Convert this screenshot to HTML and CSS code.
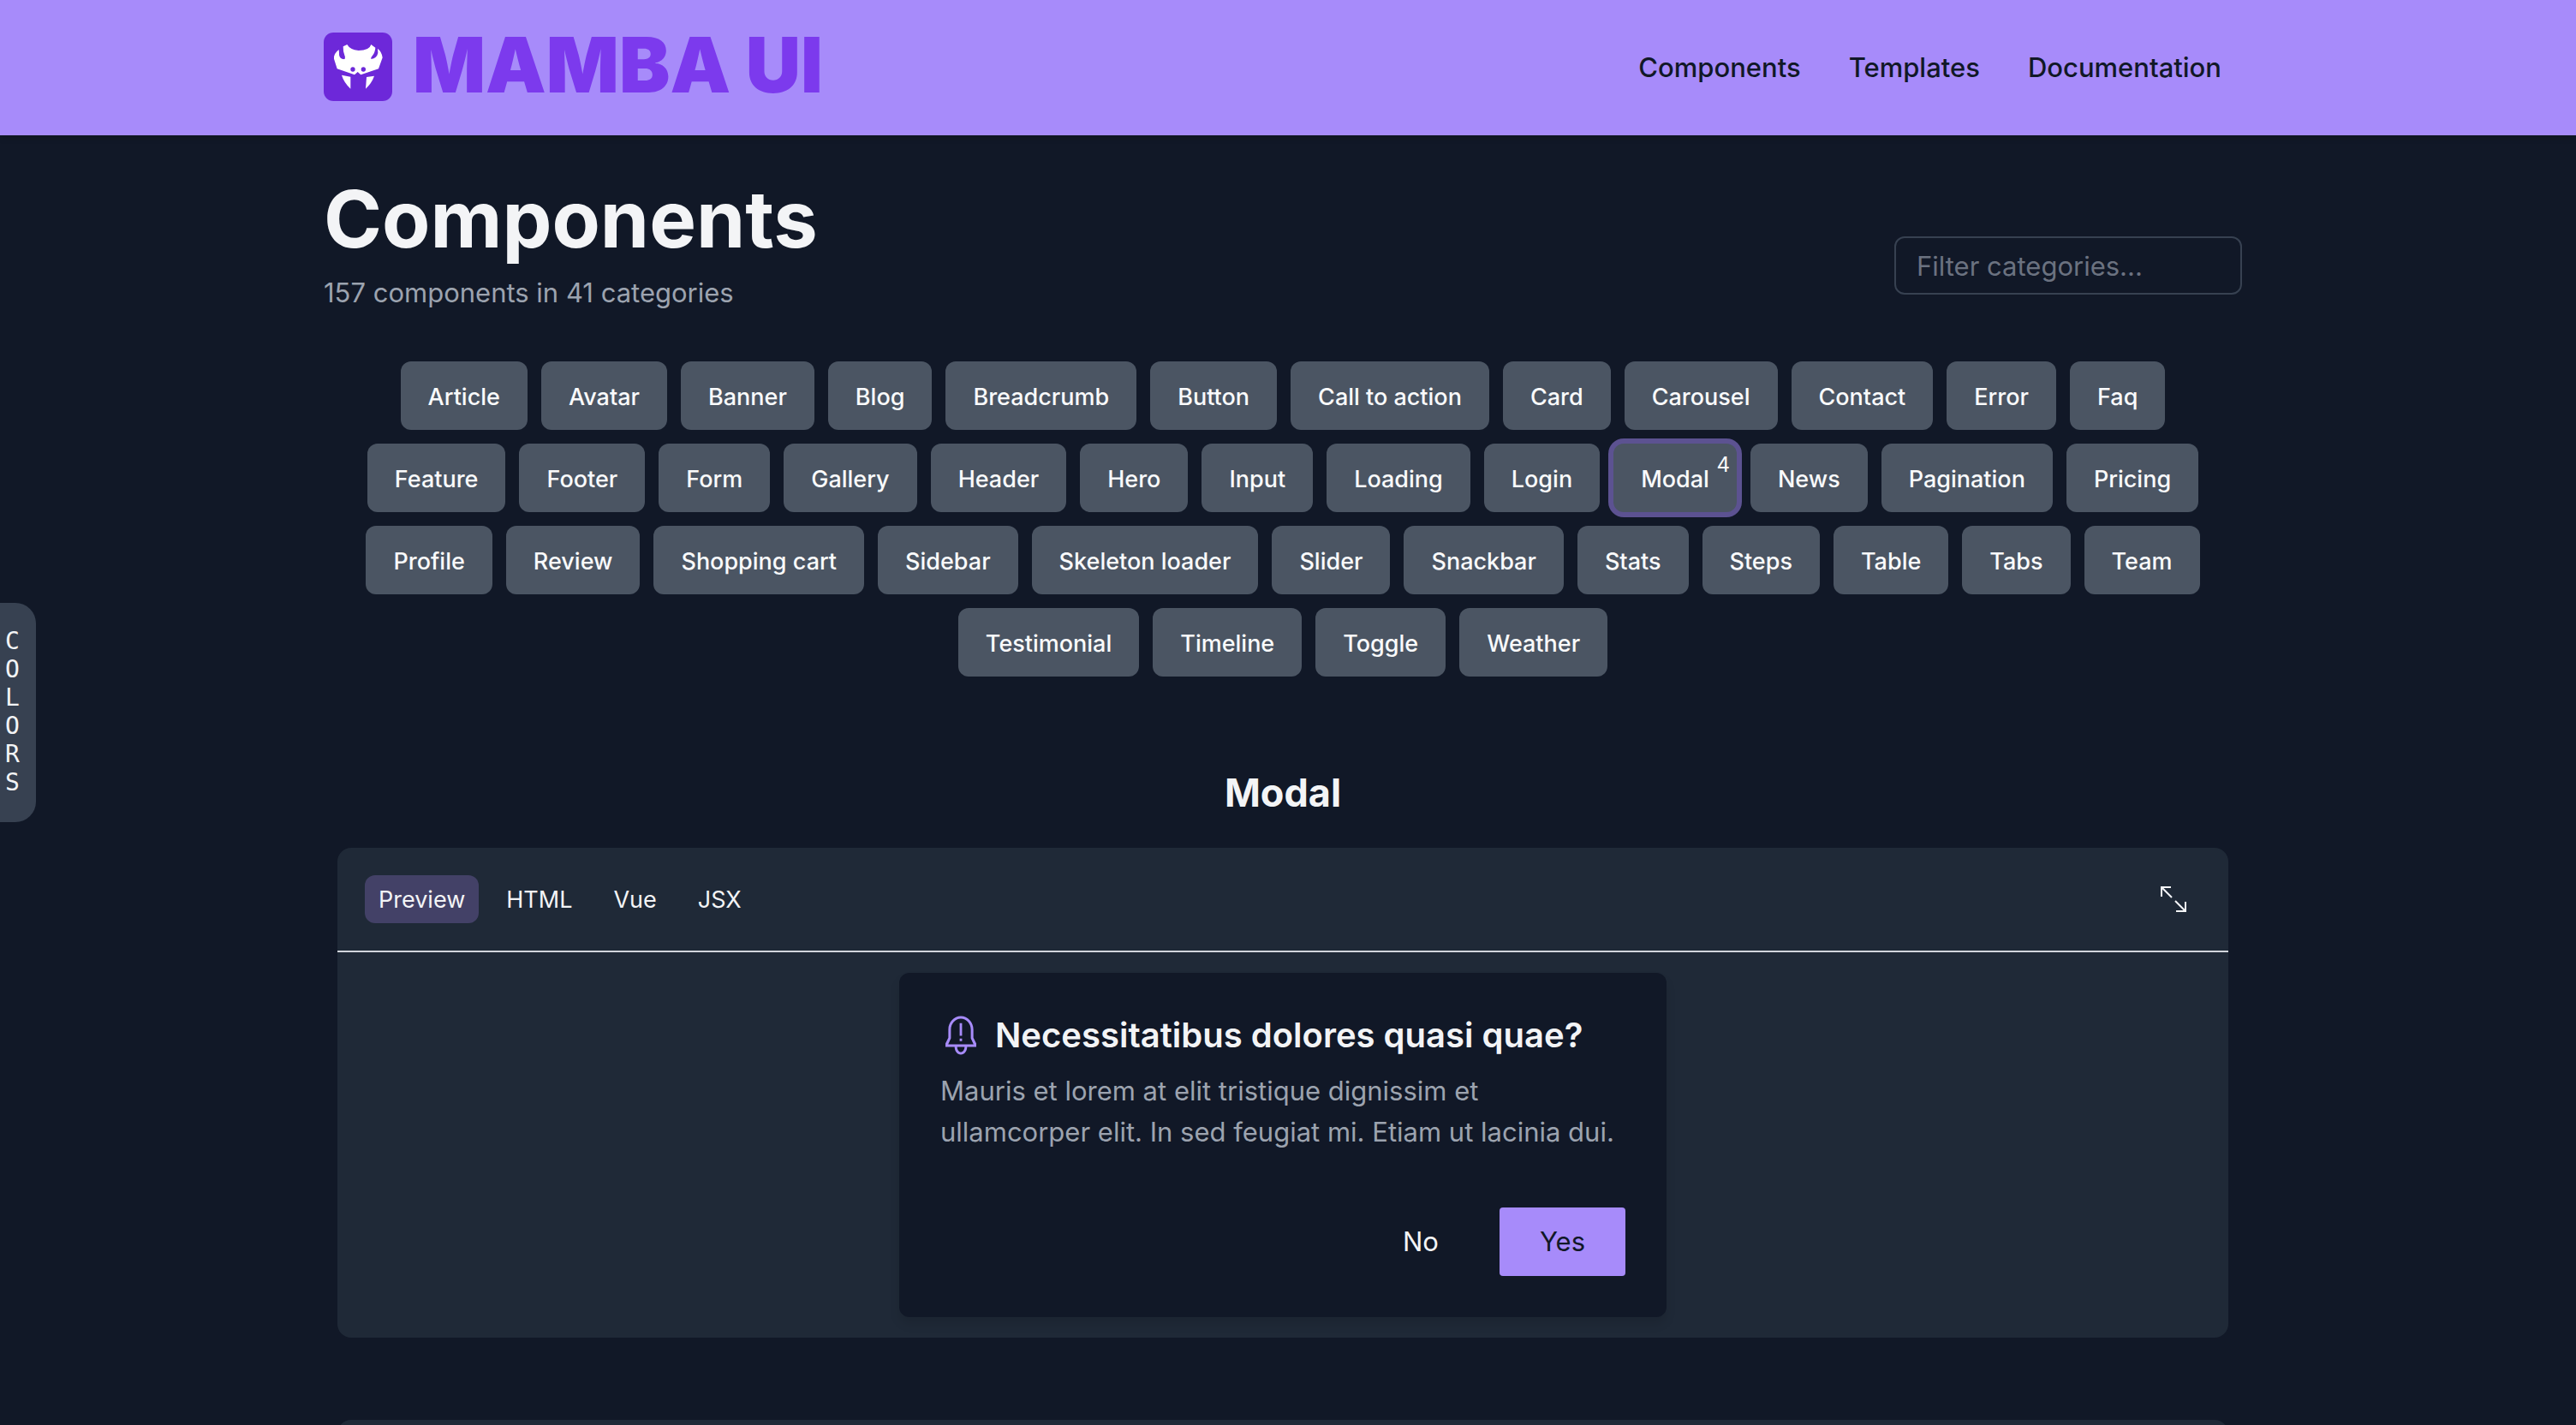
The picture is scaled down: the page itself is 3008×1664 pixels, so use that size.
FILE: index.html
```html
<!DOCTYPE html>
<html lang="en">
<head>
<meta charset="utf-8">
<title>Mamba UI - Components</title>
<link rel="stylesheet" href="styles.css">
</head>
<body>
<header class="site-header">
  <div class="container header-row">
    <a class="brand" href="#">
      <svg class="brand-mark" viewBox="24 24 240 240" aria-hidden="true">
        <rect x="24" y="24" width="240" height="240" rx="34" fill="#6d28d9"/>
        <g fill="#fff">
          <path d="M106 66L92 73Q91 92 99 110L95 118Q82 112 78 96L77 84Q58 98 60 116L71 151L132 172L143 162L154 172L216 151L230 112Q228 92 213 80L214 96Q210 114 190 117Q188 112 194 106Q204 94 205 77L190 66Q184 87 146 87Q116 84 106 66Z"/>
          <path d="M87 173L118 179V221Q94 198 87 173Z"/>
          <path d="M201 176L174 180L171 221Q193 200 201 176Z"/>
          <path fill="#6d28d9" d="M79 85Q80 105 99 113L97 117Q80 118 78 102Z"/>
        </g>
        <circle cx="126" cy="153" r="8" fill="#6d28d9"/>
        <circle cx="163" cy="153" r="8" fill="#6d28d9"/>
      </svg>
      <span class="brand-name">MAMBA UI</span>
    </a>
    <nav class="site-nav">
      <a href="#">Components</a>
      <a href="#">Templates</a>
      <a href="#">Documentation</a>
    </nav>
  </div>
</header>

<aside class="colors-tab"><button type="button" aria-label="Colors"><span>C</span><span>O</span><span>L</span><span>O</span><span>R</span><span>S</span></button></aside>

<main class="container">
  <div class="page-head">
    <div>
      <h1>Components</h1>
      <p class="summary">157 components in 41 categories</p>
    </div>
    <input class="filter" type="text" placeholder="Filter categories..." aria-label="Filter categories">
  </div>

  <nav class="categories">
    <a href="#">Article</a><a href="#">Avatar</a><a href="#">Banner</a><a href="#">Blog</a><a href="#">Breadcrumb</a><a href="#">Button</a><a href="#">Call to action</a><a href="#">Card</a><a href="#">Carousel</a><a href="#">Contact</a><a href="#">Error</a><a href="#">Faq</a>
    <a href="#">Feature</a><a href="#">Footer</a><a href="#">Form</a><a href="#">Gallery</a><a href="#">Header</a><a href="#">Hero</a><a href="#">Input</a><a href="#">Loading</a><a href="#">Login</a><a href="#" class="current">Modal<span class="count">4</span></a><a href="#">News</a><a href="#">Pagination</a><a href="#">Pricing</a>
    <a href="#">Profile</a><a href="#">Review</a><a href="#">Shopping cart</a><a href="#">Sidebar</a><a href="#">Skeleton loader</a><a href="#">Slider</a><a href="#">Snackbar</a><a href="#">Stats</a><a href="#">Steps</a><a href="#">Table</a><a href="#">Tabs</a><a href="#">Team</a>
    <a href="#">Testimonial</a><a href="#">Timeline</a><a href="#">Toggle</a><a href="#">Weather</a>
  </nav>

  <h2>Modal</h2>

  <section class="panel">
    <div class="panel-bar">
      <div class="tabs">
        <button type="button" class="active">Preview</button>
        <button type="button">HTML</button>
        <button type="button">Vue</button>
        <button type="button">JSX</button>
      </div>
      <button type="button" class="expand" aria-label="Full screen">
        <svg viewBox="0 0 32 32" fill="none" stroke="currentColor" stroke-width="2">
          <path d="M2 13V2H13M2 2L14 14M30 19V30H19M30 30L18 18"/>
        </svg>
      </button>
    </div>
    <div class="stage">
      <div class="modal">
        <div class="modal-title">
          <svg class="bell" viewBox="0 0 512 512" fill="currentColor" aria-hidden="true">
            <path d="M448 358L412 284V184C412 92 343 16 256 16S100 92 100 184V284L64 358V400H178C178 452 212 496 256 496S334 452 334 400H448ZM256 464C231 464 210 435 210 400H302C302 435 281 464 256 464ZM98 368L132 292V184C132 110 188 48 256 48S380 110 380 184V292L414 368Z"/>
            <path d="M241 104H271V260H241ZM241 296H271V328H241Z"/>
          </svg>
          <h3>Necessitatibus dolores quasi quae?</h3>
        </div>
        <p>Mauris et lorem at elit tristique dignissim et ullamcorper elit. In sed feugiat mi. Etiam ut lacinia dui.</p>
        <div class="modal-actions">
          <button type="button">No</button>
          <button type="button" class="primary">Yes</button>
        </div>
      </div>
    </div>
  </section>

  <section class="panel next-panel"></section>
</main>
</body>
</html>
```
FILE: styles.css
```css
* { box-sizing: border-box; margin: 0; }

html { scrollbar-width: none; }

body {
  background: #111827;
  color: #f3f4f6;
  font-family: Inter, "Liberation Sans", sans-serif;
  font-size: 31px;
  line-height: 48px;
}

a { color: inherit; text-decoration: none; }

button {
  border: 0;
  background: none;
  color: inherit;
  font: inherit;
  cursor: pointer;
}

.container {
  width: calc(100% - 12px);
  padding: 0 calc(50% - 1126px);
}

.site-header {
  background: #a78bfa;
  color: #111827;
  box-shadow: 0 2px 8px rgba(0, 0, 0, .2);
}

.header-row {
  display: flex;
  align-items: center;
  justify-content: space-between;
  min-height: 158px;
}

.brand { display: flex; align-items: center; gap: 24px; padding-bottom: 2px; }
.brand-mark { width: 80px; height: 80px; }
.brand-name {
  color: #7c3aed;
  font-size: 89px;
  font-weight: 900;
  line-height: 76px;
  padding-bottom: 4px;
}

.site-nav {
  display: flex;
  gap: 56px;
  padding-right: 24px;
  font-weight: 500;
}

.page-head {
  display: flex;
  align-items: center;
  justify-content: space-between;
  padding-top: 50px;
}

h1 { font-size: 92px; line-height: 96px; font-weight: 700; }
.summary { margin-top: 14px; padding-bottom: 2px; color: #9ca3af; }

.filter {
  width: 406px;
  height: 68px;
  margin-top: 44px;
  padding: 0 24px;
  border: 2px solid #374151;
  border-radius: 12px;
  background: transparent;
  color: inherit;
  font: inherit;
}
.filter::placeholder { color: #6b7280; opacity: 1; }

.categories {
  display: flex;
  flex-wrap: wrap;
  justify-content: center;
  gap: 16px;
  padding: 54px 32px 0;
}
.categories a {
  position: relative;
  padding: 18px 32px 14px;
  border-radius: 12px;
  background: #4b5563;
  color: #f9fafb;
  font-size: 27px;
  font-weight: 500;
}
.categories .current { box-shadow: 0 0 0 6px #5c5291; }
.count {
  position: absolute;
  top: 9px;
  right: 8px;
  font-size: 24px;
  font-weight: 400;
  line-height: 32px;
}

h2 {
  margin-top: 104px;
  font-size: 45px;
  font-weight: 700;
  line-height: 64px;
  text-align: center;
}

.panel {
  margin: 32px 16px 0;
  border-radius: 16px;
  background: #1f2937;
}
.panel-bar {
  display: flex;
  align-items: center;
  justify-content: space-between;
  padding: 32px 48px 32px 32px;
  border-bottom: 2px solid #d1d5db;
}
.tabs { display: flex; gap: 16px; }
.tabs button {
  padding: 9px 16px 7px;
  border-radius: 12px;
  font-size: 27px;
  line-height: 40px;
}
.tabs .active { background: #434167; }
.expand { padding: 0; width: 32px; height: 32px; }
.expand svg { display: block; }

.stage { display: flex; justify-content: center; padding: 24px; }
.modal {
  width: 896px;
  padding: 48px;
  border-radius: 12px;
  background: #111827;
  box-shadow: 0 8px 12px rgba(0, 0, 0, .1);
}
.modal-title { display: flex; align-items: center; gap: 16px; }
.bell { width: 48px; height: 48px; color: #a78bfa; }
h3 { font-size: 40px; font-weight: 600; line-height: 50px; }
.modal p { margin-top: 16px; color: #9ca3af; }
.modal-actions {
  display: flex;
  justify-content: flex-end;
  gap: 24px;
  margin-top: 64px;
}
.modal-actions button { padding: 16px 47px; border-radius: 4px; }
.modal-actions .primary { background: #a78bfa; color: #111827; }

.next-panel { height: 200px; margin-top: 96px; }

.colors-tab {
  position: fixed;
  left: 0;
  top: 50%;
  transform: translateY(-50%);
}
.colors-tab button {
  display: flex;
  flex-direction: column;
  padding: 28px 19px 30px 6px;
  border-radius: 0 24px 24px 0;
  background: #374151;
  font-family: "DejaVu Sans Mono", monospace;
  font-size: 28px;
  line-height: 33px;
}
```
